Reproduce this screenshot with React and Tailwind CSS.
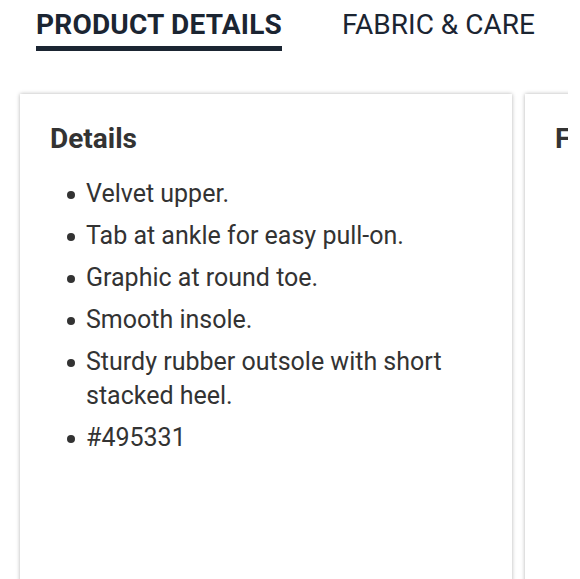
const details = [
  'Velvet upper.',
  'Tab at ankle for easy pull-on.',
  'Graphic at round toe.',
  'Smooth insole.',
  'Sturdy rubber outsole with short stacked heel.',
  '#495331',
]

export default function App() {
  return (
    <div className="w-[580px] h-[579px] overflow-hidden bg-white font-['Roboto',sans-serif]">
      {/* Tabs */}
      <div className="flex pl-[36px] pt-[9px] gap-[60px] whitespace-nowrap">
        <div className="flex flex-col">
          <span className="text-[28px] leading-[32px] font-bold tracking-[0.2px] text-[#1b2532]">PRODUCT DETAILS</span>
          <div className="mt-[5px] h-[5px] bg-[#1b2532]" />
        </div>
        <span className="text-[28px] leading-[32px] text-[#1b2532]">FABRIC &amp; CARE</span>
      </div>

      {/* Cards */}
      <div className="w-[568px] overflow-hidden">
        <div className="flex gap-[13px] pl-[20px] pt-[43px]">
          <div className="shrink-0 w-[492px] h-[520px] bg-white shadow-[0_0_4px_rgba(0,0,0,0.3)] pl-[30px] pr-[20px] pt-[29px]">
            <h3 className="text-[28px] leading-[32px] font-bold text-[#333333]">Details</h3>
            <ul className="mt-[22px] flex flex-col gap-[8px]">
              {details.map(d => (
                <li key={d} className="flex text-[25px] leading-[34px] text-[#333333]">
                  <span className="shrink-0 w-[36px] flex items-start pt-[14px] pl-[17px]">
                    <span className="w-[8px] h-[8px] rounded-full bg-[#333333]" />
                  </span>
                  <span className="w-[380px]">{d}</span>
                </li>
              ))}
            </ul>
          </div>
          <div className="shrink-0 w-[492px] h-[520px] bg-white shadow-[0_0_4px_rgba(0,0,0,0.3)] pl-[30px] pt-[29px]">
            <h3 className="text-[28px] leading-[32px] font-bold text-[#333333]">Fabric &amp; Care</h3>
          </div>
        </div>
      </div>
    </div>
  )
}
